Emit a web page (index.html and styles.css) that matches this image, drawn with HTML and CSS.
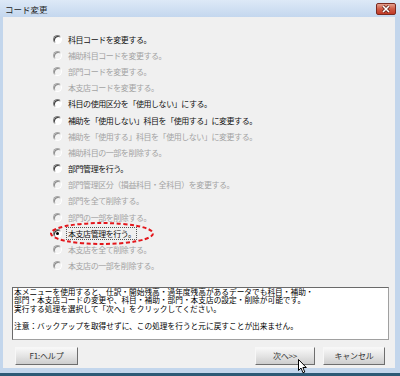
FILE: index.html
```html
<!DOCTYPE html>
<html lang="ja">
  <head>
    <meta charset="UTF-8" />
    <title>コード変更</title>
    <link rel="stylesheet" href="styles.css">
  </head>
  <body>
    <div class="window">
      <div class="titlebar">
        <span class="title">コード変更</span>
        <span class="close">
          <svg width="10" height="8" viewBox="0 0 10 8">
            <path d="M2 1 L8 7 M8 1 L2 7" stroke="#5a1d16" stroke-width="3" />
            <path d="M2 1 L8 7 M8 1 L2 7" stroke="#ffffff" stroke-width="1.6" />
          </svg>
        </span>
      </div>
      <div class="client">
        <ul class="options">
          <li class="opt"><span class="radio"></span><span class="label">科目コードを変更する。</span></li>
          <li class="opt off"><span class="radio"></span><span class="label">補助科目コードを変更する。</span></li>
          <li class="opt off"><span class="radio"></span><span class="label">部門コードを変更する。</span></li>
          <li class="opt off"><span class="radio"></span><span class="label">本支店コードを変更する。</span></li>
          <li class="opt"><span class="radio"></span><span class="label">科目の使用区分を「使用しない」にする。</span></li>
          <li class="opt"><span class="radio"></span><span class="label">補助を「使用しない」科目を「使用する」に変更する。</span></li>
          <li class="opt off"><span class="radio"></span><span class="label">補助を「使用する」科目を「使用しない」に変更する。</span></li>
          <li class="opt off"><span class="radio"></span><span class="label">補助科目の一部を削除する。</span></li>
          <li class="opt"><span class="radio"></span><span class="label">部門管理を行う。</span></li>
          <li class="opt off"><span class="radio"></span><span class="label">部門管理区分（損益科目・全科目）を変更する。</span></li>
          <li class="opt off"><span class="radio"></span><span class="label">部門を全て削除する。</span></li>
          <li class="opt off"><span class="radio"></span><span class="label">部門の一部を削除する。</span></li>
          <li class="opt checked"><span class="radio"></span><span class="label focus">本支店管理を行う。</span></li>
          <li class="opt off"><span class="radio"></span><span class="label">本支店を全て削除する。</span></li>
          <li class="opt off"><span class="radio"></span><span class="label">本支店の一部を削除する。</span></li>
        </ul>

        <div class="note">
          本メニューを使用すると、仕訳・開始残高・過年度残高があるデータでも科目・補助・<br>
          部門・本支店コードの変更や、科目・補助・部門・本支店の設定・削除が可能です。<br>
          実行する処理を選択して「次へ」をクリックしてください。<br>
          <br>
          注意：バックアップを取得せずに、この処理を行うと元に戻すことが出来ません。
        </div>

        <div class="buttons">
          <button class="btn help">F1:ヘルプ</button>
          <button class="btn next">次へ&gt;&gt;</button>
          <button class="btn cancel">キャンセル</button>
        </div>
      </div>

      <!-- 赤い点線の囲み -->
      <svg class="mark" width="106" height="25" viewBox="0 0 106 25">
        <ellipse cx="53" cy="12.5" rx="51" ry="10.5" fill="none" stroke="#e3161b" stroke-width="2" stroke-dasharray="4 2.5" />
      </svg>

      <!-- マウスカーソル -->
      <svg class="cursor" width="10" height="15" viewBox="0 0 10 15">
        <path d="M0.5 0.5 L0.5 11.5 L3 9 L5 13.8 L6.8 13 L4.9 8.5 L8.3 8.5 Z" fill="#ffffff" stroke="#000000" stroke-width="1" stroke-linejoin="round" />
      </svg>
    </div>
  </body>
</html>
```

FILE: styles.css
```css
body {
  margin: 0;
  background-color: #2d5a76;
  font-family: "Noto Sans CJK JP", "Noto Sans", sans-serif;
}
.window {
  position: relative;
  width: 400px;
  height: 376px;
  box-sizing: border-box;
  display: flex;
  flex-direction: column;
  background-color: #c3d6ec;
  border-bottom: 3px solid #2d5a76;
}
.titlebar {
  height: 17px;
  display: flex;
  align-items: center;
  justify-content: space-between;
  padding: 0 4px 0 5px;
  background: linear-gradient(#dde9f7, #c4d7ee);
}
.title {
  font-size: 8.5px;
  color: #1e1e1e;
}
.close {
  width: 18px;
  height: 10px;
  display: flex;
  align-items: center;
  justify-content: center;
  border: 1px solid #7b2a20;
  border-radius: 2px;
  background: linear-gradient(#e3a08f, #cf5a45 50%, #c13a26);
}
.close svg {
  display: block;
}
.client {
  flex: 1;
  margin: 0 5px 5px 3px;
  background-color: #f0f0f0;
  display: flex;
  flex-direction: column;
}
.options {
  list-style: none;
  margin: 0;
  padding: 14px 0 0 50px;
}
.opt {
  height: 16.2px;
  display: flex;
  align-items: center;
  gap: 6px;
  font-size: 8px;
  color: #111;
  letter-spacing: -0.45px;
  white-space: nowrap;
}
.opt.off {
  color: #a3a3a3;
}
.radio {
  position: relative;
  width: 7px;
  height: 7px;
  flex: none;
  border: 1px solid;
  border-color: #7d7d7d #ffffff #ffffff #7d7d7d;
  border-radius: 50%;
  background-color: #ffffff;
  box-shadow: inset 1px 1px 0 #3c3c3c;
}
.opt.off .radio {
  border-color: #a8a8a8 #ffffff #ffffff #a8a8a8;
  box-shadow: inset 1px 1px 0 #8a8a8a;
  background-color: #f4f4f4;
}
.opt.checked .radio::after {
  content: "";
  position: absolute;
  left: 2px;
  top: 2px;
  width: 3px;
  height: 3px;
  border-radius: 50%;
  background-color: #000;
}
.label {
  line-height: 11px;
}
.focus {
  outline: 1px dotted #555;
  outline-offset: 0;
  padding: 0 1px;
  margin-left: -1px;
}
.note {
  margin: 13px 6px 0 9px;
  height: 53px;
  box-sizing: border-box;
  padding: 0 2px 0 1px;
  border: 1px solid;
  border-color: #6a6a6a #a0a0a0 #a0a0a0 #6a6a6a;
  background-color: #ffffff;
  font-size: 7.7px;
  line-height: 8.6px;
  color: #000;
  white-space: nowrap;
  overflow: hidden;
}
.buttons {
  display: flex;
  gap: 8px;
  margin-top: 7px;
  padding: 0 10px 0 12px;
}
.btn {
  height: 18px;
  padding: 0;
  border: 1px solid;
  border-color: #f7f7f7 #6e6e6e #6e6e6e #f7f7f7;
  background: linear-gradient(#f8f8f8, #e4e4e4 50%, #cdcdcd);
  font-family: "Noto Sans CJK JP", sans-serif;
  font-size: 8px;
  color: #333;
  letter-spacing: -0.2px;
}
.help {
  width: 63px;
}
.next {
  width: 60px;
  margin-left: auto;
}
.cancel {
  width: 62px;
}
.mark {
  position: absolute;
  left: 49px;
  top: 221px;
}
.cursor {
  position: absolute;
  left: 298px;
  top: 359px;
}
```
